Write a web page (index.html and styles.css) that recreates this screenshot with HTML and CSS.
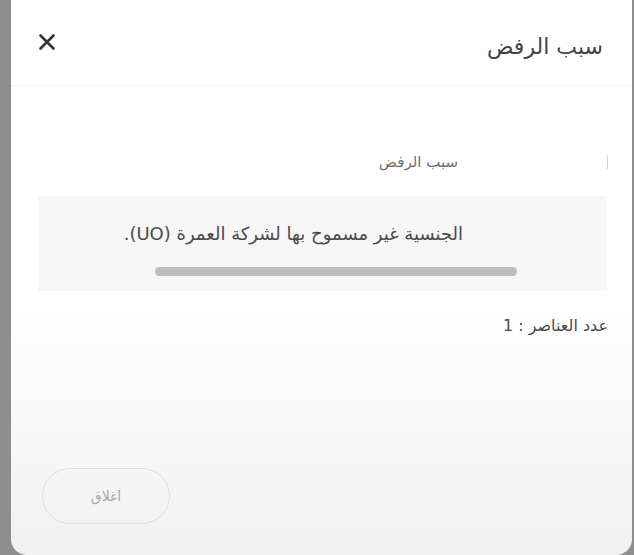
FILE: index.html
```html
<!DOCTYPE html>
<html lang="ar" dir="rtl">
<head>
    <meta charset="UTF-8">
    <meta name="viewport" content="width=device-width, initial-scale=1.0">
    <title>سبب الرفض</title>
    <link rel="stylesheet" href="styles.css">
</head>
<body>
    <div class="modal">
        <div class="modal-header">
            <h2 class="modal-title">سبب الرفض</h2>
            <button class="close-btn" aria-label="close">
                <svg width="18" height="18" viewBox="0 0 18 18">
                    <path d="M2.5 2.5 L15.5 15.5 M15.5 2.5 L2.5 15.5" stroke="#333" stroke-width="2.6" stroke-linecap="round"/>
                </svg>
            </button>
        </div>

        <div class="modal-body">
            <div class="grid">
                <div class="grid-head">
                    <span class="col-sep"></span>
                    <span class="col-title">سبب الرفض</span>
                </div>
                <div class="grid-rows">
                    <div class="grid-cell">الجنسية غير مسموح بها لشركة العمرة (UO).</div>
                    <div class="scrollbar"><span class="thumb"></span></div>
                </div>
            </div>
            <div class="grid-count">عدد العناصر : 1</div>
        </div>

        <div class="modal-footer">
            <button class="btn-close">اغلاق</button>
        </div>
    </div>
</body>
</html>
```

FILE: styles.css
```css
* {
    margin: 0;
    padding: 0;
    box-sizing: border-box;
}

body {
    font-family: 'DejaVu Sans', 'Noto Sans', sans-serif;
    background: #8e8e8e;
    height: 555px;
    overflow: hidden;
    direction: rtl;
}

.modal {
    margin-left: 11px;
    margin-right: 2px;
    height: 555px;
    background: linear-gradient(180deg, #ffffff 0%, #ffffff 55%, #f1f1f1 100%);
    border-radius: 0 0 16px 16px;
    display: flex;
    flex-direction: column;
    color: #444;
}

.modal-header {
    height: 86px;
    display: flex;
    align-items: center;
    justify-content: space-between;
    padding: 8px 29px 0 27px;
    border-bottom: 1px solid #f3f3f3;
}

.modal-title {
    font-size: 22px;
    font-weight: normal;
    color: #444;
}

.close-btn {
    background: none;
    border: none;
    width: 18px;
    height: 18px;
    margin-top: -10px;
}

.modal-body {
    padding: 60px 24px 0 27px;
    flex: 1;
}

.grid-head {
    display: flex;
    align-items: center;
    height: 32px;
}

.col-sep {
    width: 1px;
    height: 14px;
    background: #d0d0d0;
}

.col-title {
    font-size: 15px;
    color: #707070;
    margin-right: 149px;
}

.grid-rows {
    margin-top: 18px;
    margin-right: 1px;
    background: #f7f7f7;
    height: 95px;
    padding-top: 27px;
}

.grid-cell {
    font-size: 18px;
    line-height: 22px;
    color: #4a4a4a;
    padding-right: 144px;
}

.scrollbar {
    margin-top: 22px;
    padding-right: 90px;
}

.thumb {
    display: block;
    width: 362px;
    height: 9px;
    border-radius: 5px;
    background: #bdbdbd;
}

.grid-count {
    margin-top: 25px;
    font-size: 16px;
    color: #4a4a4a;
}

.modal-footer {
    height: 110px;
    display: flex;
    justify-content: flex-end;
    padding-left: 31px;
}

.btn-close {
    width: 128px;
    height: 56px;
    margin-top: 23px;
    border: 1.5px solid #dcdcdc;
    border-radius: 28px;
    background: transparent;
    font-family: inherit;
    font-size: 14px;
    color: #a8a8a8;
}
```
